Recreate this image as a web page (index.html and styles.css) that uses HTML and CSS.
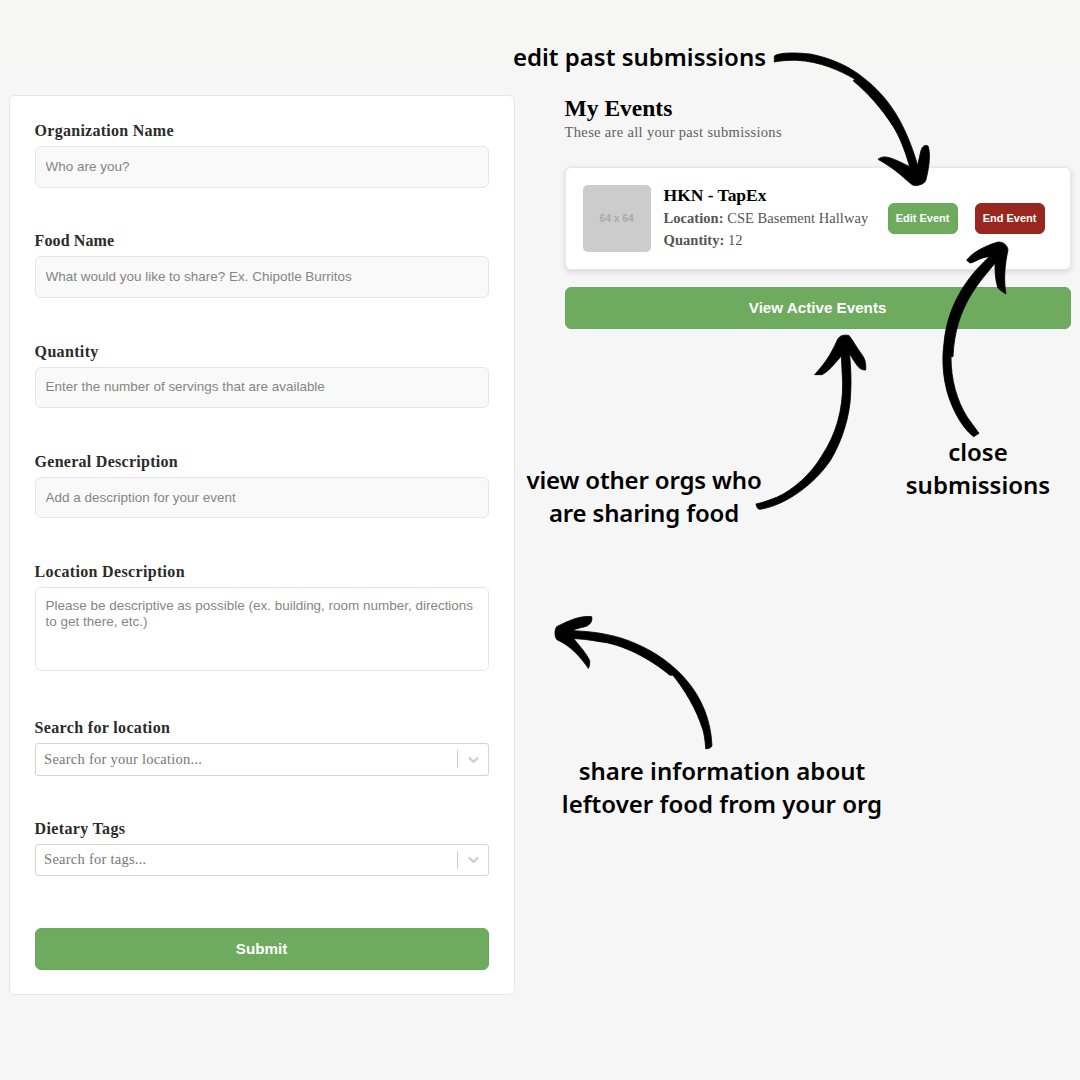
FILE: index.html
```html
<!DOCTYPE html>
<html lang="en">
<head>
<meta charset="utf-8">
<title>My Events</title>
<link rel="stylesheet" href="styles.css">
</head>
<body>
<main class="page">
  <form class="form-card">
    <div class="field"><label class="label l-org" for="org">Organization Name</label><input class="input" id="org" placeholder="Who are you?"></div>
    <div class="field"><label class="label l-food" for="food">Food Name</label><input class="input" id="food" placeholder="What would you like to share? Ex. Chipotle Burritos"></div>
    <div class="field"><label class="label l-qty" for="qty">Quantity</label><input class="input" id="qty" placeholder="Enter the number of servings that are available"></div>
    <div class="field"><label class="label l-gen" for="desc">General Description</label><input class="input" id="desc" placeholder="Add a description for your event"></div>
    <div class="field field-area"><label class="label l-loc" for="loc">Location Description</label><textarea class="input area" id="loc" placeholder="Please be descriptive as possible (ex. building, room number, directions to get there, etc.)"></textarea></div>
    <div class="field field-search">
      <span class="label l-search">Search for location</span>
      <div class="select"><span class="select-text">Search for your location...</span><span class="divider"></span><svg class="chevron" viewBox="0 0 20 20"><path d="M4.516 7.548c0.436-0.446 1.043-0.481 1.576 0l3.908 3.747 3.908-3.747c0.533-0.481 1.141-0.446 1.574 0 0.436 0.445 0.408 1.197 0 1.615-0.406 0.418-4.695 4.502-4.695 4.502-0.217 0.223-0.502 0.335-0.787 0.335s-0.57-0.112-0.789-0.335c0 0-4.287-4.084-4.695-4.502s-0.436-1.17 0-1.615z"/></svg></div>
    </div>
    <div class="field field-last">
      <span class="label l-diet">Dietary Tags</span>
      <div class="select"><span class="select-text">Search for tags...</span><span class="divider"></span><svg class="chevron" viewBox="0 0 20 20"><path d="M4.516 7.548c0.436-0.446 1.043-0.481 1.576 0l3.908 3.747 3.908-3.747c0.533-0.481 1.141-0.446 1.574 0 0.436 0.445 0.408 1.197 0 1.615-0.406 0.418-4.695 4.502-4.695 4.502-0.217 0.223-0.502 0.335-0.787 0.335s-0.57-0.112-0.789-0.335c0 0-4.287-4.084-4.695-4.502s-0.436-1.17 0-1.615z"/></svg></div>
    </div>
    <button class="button" type="button">Submit</button>
  </form>
  <section class="events">
    <h1 class="title">My Events</h1>
    <p class="subtitle">These are all your past submissions</p>
    <article class="event">
      <div class="thumb">64 x 64</div>
      <div class="info">
        <h2 class="event-name">HKN - TapEx</h2>
        <p class="meta"><b>Location:</b> CSE Basement Hallway</p>
        <p class="meta"><b>Quantity:</b> 12</p>
      </div>
      <button class="small-button" type="button">Edit Event</button>
      <button class="small-button end" type="button">End Event</button>
    </article>
    <button class="button" type="button">View Active Events</button>
  </section>
</main>
<div class="note note-edit">edit past submissions</div>
<div class="note note-view">view other orgs who<br>are sharing food</div>
<div class="note note-close">close<br>submissions</div>
<div class="note note-share">share information about<br>leftover food from your org</div>
<svg class="arrows" viewBox="0 0 1080 1080">
  <path transform="translate(760 40) scale(.33333)" d="M43 48C60 36 110 38 150 42C210 54 255 74 294 101C373 158 430 230 473 376L482 335C486 318 495 313 504 318C511 335 510 375 497 422C492 432 475 438 460 436C440 425 420 395 354 358C372 344 390 350 449 380C440 350 425 300 400 260C365 205 320 155 280 123L284 117C240 92 180 64 110 61C80 60 60 63 43 66Z"/>
  <path transform="translate(930 230) scale(.33333)" d="M131 620C90 590 60 520 50 480C35 420 38 370 42 340C50 250 90 160 178 80C150 82 135 97 120 99L110 91C125 68 170 45 205 36C220 36 232 45 234 60C225 100 220 150 228 192C215 184 208 180 203 172C195 145 195 120 195 100C150 155 75 230 69 380L63 380C63 450 80 510 112 562L147 610Z"/>
  <path transform="translate(740 320) scale(.33333)" d="M48 552C80 545 100 535 110 532C160 510 215 460 245 408C290 340 308 270 308 190L304 108C285 130 265 155 246 164L224 164C250 135 270 110 292 60C300 44 312 45 326 46C335 55 345 75 365 103C378 120 378 135 377 150C360 150 355 145 328 100C333 140 334 180 332 220C330 290 305 365 272 420C225 490 140 555 60 568C52 568 50 560 48 552Z"/>
  <path transform="translate(540 600) scale(.33333)" d="M497 446C496 420 490 390 487 385C470 330 435 270 398 225L390 226C330 176 250 133 180 125C150 120 120 116 101 116C125 145 142 165 149 182C150 195 146 204 145 205C125 175 90 135 52 120C43 112 43 90 50 80C80 65 120 45 155 50C158 65 150 75 135 80C120 84 108 85 99 92C170 95 230 105 290 132C400 180 510 280 516 438C510 446 505 446 497 446Z"/>
</svg>
</body>
</html>
```
FILE: styles.css
```css
* { box-sizing: border-box; }
body { margin: 0; width: 1080px; height: 1080px; overflow: hidden; position: relative; background: linear-gradient(#f6f6f4 72px, #f6f6f6 72px); font-family: "Liberation Serif", serif; }
h1, h2, p { margin: 0; }
.page { display: grid; grid-template-columns: 506px 506px; column-gap: 50px; align-items: start; padding: 95.4px 0 0 8.6px; }
.form-card { display: flex; flex-direction: column; height: 900px; padding: 23.8px 25px 0; background: #fff; border: 1px solid #e6e6e6; border-radius: 6px; }
.field { display: flex; flex-direction: column; margin-bottom: 42.75px; }
.field-area { margin-bottom: 46px; }
.field-search { margin-bottom: 42px; }
.field-last { margin-bottom: 51.4px; }
.label { height: 20px; margin-bottom: 6px; font-size: 16px; font-weight: 700; line-height: 21px; color: #2b2b2b; white-space: nowrap; letter-spacing: .27px; }
.l-food { letter-spacing: .1px; }
.l-qty, .l-loc, .l-search, .l-diet { letter-spacing: .34px; }
.input { width: 100%; height: 41.5px; padding: 0 10px 1px; background: #f9f9f9; border: 1px solid #e6e6e6; border-radius: 6px; font: 13.47px/16px "Liberation Sans", sans-serif; }
.input::placeholder { color: #858585; }
.area { height: 84px; padding: 10px; background: #fff; resize: none; display: block; overflow: hidden; }
.select { display: flex; align-items: center; height: 32.5px; padding: 0 6px 0 8.5px; border: 1px solid #d4d4d4; border-radius: 3px; background: #fff; }
.select-text { flex: 1; font-size: 14.5px; color: #777; letter-spacing: .25px; white-space: nowrap; }
.divider { width: 1px; height: 18px; margin-right: 7px; background: #ccc; }
.chevron { width: 17px; height: 17px; fill: #ccc; stroke: #ccc; stroke-width: .5; }
.button { width: 100%; height: 42px; padding: 0; flex: none; border: 1px solid #66aa5c; border-radius: 6px; background: #6eab5e; color: #fff; font: 700 15.2px "Liberation Sans", sans-serif; }
.events { display: flex; flex-direction: column; }
.title { height: 26px; font-size: 23.5px; line-height: 26px; letter-spacing: 0; color: #000; white-space: nowrap; }
.subtitle { height: 20px; margin: 1px 0 24.4px; font-size: 14.5px; line-height: 20px; letter-spacing: .33px; color: #606060; white-space: nowrap; }
.event { display: flex; align-items: center; height: 103px; margin-bottom: 17px; padding: 0 25px 0 17px; background: #fff; border: 1px solid #e6e6e6; border-radius: 6px; box-shadow: 0 2px 6px rgba(0, 0, 0, .13); }
.thumb { display: flex; align-items: center; justify-content: center; width: 68px; height: 67px; margin-right: 13px; border-radius: 5px; background: #ccc; color: #aaa; font: 700 10.3px "Liberation Sans", sans-serif; }
.info { flex: 1; padding-bottom: 3px; }
.event-name { height: 23.5px; font-size: 17.5px; line-height: 24px; letter-spacing: -.02px; color: #000; white-space: nowrap; }
.meta { height: 22px; font-size: 14.5px; line-height: 22px; letter-spacing: .04px; color: #555; white-space: nowrap; }
.small-button { width: 70px; height: 31px; padding: 0 0 1px; border: 1px solid #66aa5c; border-radius: 6px; background: #6eab5e; color: #fff; font: 700 11px "Liberation Sans", sans-serif; white-space: nowrap; }
.end { margin-left: 17px; background: #98281f; border-color: #98281f; }
.note { position: absolute; font: 600 24px/33px "Noto Sans", sans-serif; color: #000; text-align: center; white-space: nowrap; transform: translateX(-50%); }
.note-edit { left: 639.5px; top: 40px; }
.note-view { left: 644px; top: 463px; letter-spacing: -.17px; }
.note-close { left: 978px; top: 435px; }
.note-share { left: 722px; top: 754px; }
.arrows { position: absolute; left: 0; top: 0; width: 1080px; height: 1080px; pointer-events: none; stroke: #000; stroke-width: 2.5; stroke-linejoin: round; }
```
